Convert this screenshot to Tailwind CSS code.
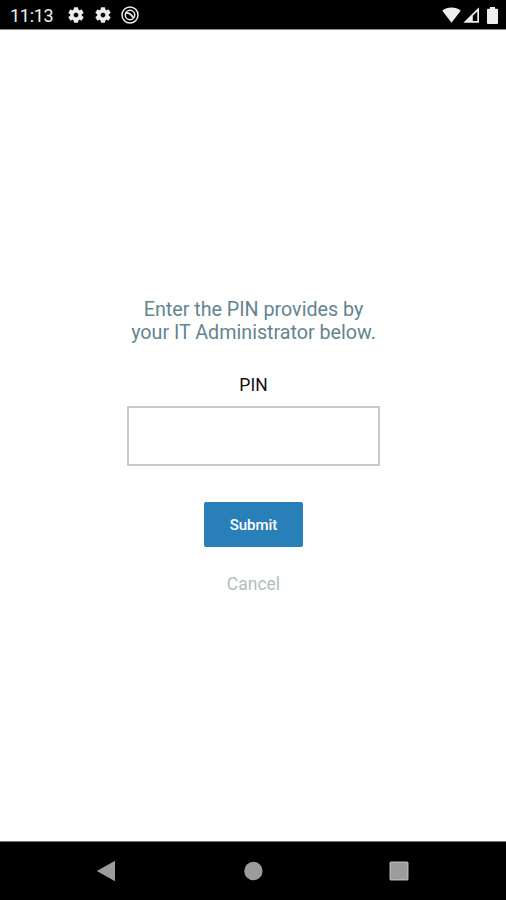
<!DOCTYPE html>
<html lang="en">
<head>
  <meta charset="UTF-8" />
  <meta name="viewport" content="width=device-width, initial-scale=1" />
  <title>Enter PIN</title>
  <script src="https://cdn.jsdelivr.net/npm/@tailwindcss/browser@4"></script>
  <style>
    body {
      font-family: Roboto, sans-serif;
    }
  </style>
</head>
<body class="bg-white h-[900px] flex flex-col overflow-hidden">
  <!-- Status bar -->
  <header class="bg-black h-[30px] shrink-0 border-b border-[#8a8a8a] flex items-center justify-between pl-2.5 pr-2 pt-px text-[#eeeeee]">
    <div class="flex items-center">
      <span class="w-[57px] pt-px text-[18px] leading-6 tracking-[-0.3px]">11:13</span>
      <svg class="w-[18px] h-[18px] mr-[9px]" viewBox="0 0 24 24" fill="currentColor" stroke="currentColor" stroke-width=".7">
        <path d="M19.43 12.98c.04-.32.07-.64.07-.98s-.03-.66-.07-.98l2.11-1.65c.19-.15.24-.42.12-.64l-2-3.46c-.12-.22-.39-.3-.61-.22l-2.49 1c-.52-.4-1.08-.73-1.69-.98l-.38-2.65A.488.488 0 0 0 14 2h-4c-.25 0-.46.18-.49.42l-.38 2.65c-.61.25-1.17.59-1.69.98l-2.49-1c-.23-.09-.49 0-.61.22l-2 3.46c-.13.22-.07.49.12.64l2.11 1.65c-.04.32-.07.65-.07.98s.03.66.07.98l-2.11 1.65c-.19.15-.24.42-.12.64l2 3.46c.12.22.39.3.61.22l2.49-1c.52.4 1.08.73 1.69.98l.38 2.65c.03.24.24.42.49.42h4c.25 0 .46-.18.49-.42l.38-2.65c.61-.25 1.17-.59 1.69-.98l2.49 1c.23.09.49 0 .61-.22l2-3.46c.12-.22.07-.49-.12-.64l-2.11-1.65zM12 15.5c-1.93 0-3.5-1.57-3.5-3.5s1.57-3.5 3.5-3.5 3.500 1.570 3.500 3.500-1.570 3.500-3.500 3.500z" />
      </svg>
      <svg class="w-[18px] h-[18px] mr-[9px]" viewBox="0 0 24 24" fill="currentColor" stroke="currentColor" stroke-width=".7">
        <path d="M19.43 12.98c.04-.32.07-.64.07-.98s-.03-.66-.07-.98l2.11-1.65c.19-.15.24-.42.12-.64l-2-3.46c-.12-.22-.39-.3-.61-.22l-2.49 1c-.52-.4-1.08-.73-1.69-.98l-.38-2.65A.488.488 0 0 0 14 2h-4c-.25 0-.46.18-.49.42l-.38 2.65c-.61.25-1.17.59-1.69.98l-2.49-1c-.23-.09-.49 0-.61.22l-2 3.46c-.13.22-.07.49.12.64l2.11 1.65c-.04.32-.07.65-.07.98s.03.66.07.98l-2.11 1.65c-.19.15-.24.42-.12.64l2 3.46c.12.22.39.3.61.22l2.49-1c.52.4 1.08.73 1.69.98l.38 2.65c.03.24.24.42.49.42h4c.25 0 .46-.18.49-.42l.38-2.65c.61-.25 1.17-.59 1.69-.98l2.49 1c.23.09.49 0 .61-.22l2-3.46c.12-.22.07-.49-.12-.64l-2.11-1.65zM12 15.5c-1.93 0-3.5-1.57-3.5-3.5s1.57-3.5 3.5-3.5 3.500 1.570 3.500 3.500-1.570 3.500-3.500 3.500z" />
      </svg>
      <svg class="w-[18px] h-[18px]" viewBox="0 0 18 18" fill="none" stroke="currentColor">
        <circle cx="9" cy="9" r="8" stroke-width="1.5" />
        <circle cx="9" cy="9" r="4.700" stroke-width="1.500" />
        <path d="M4.800 7Q9 6.600 12.400 11.800" stroke-width="1.800" />
      </svg>
    </div>
    <div class="flex items-center">
      <svg class="w-[19px] h-[16px]" viewBox="0 0 19 16" fill="currentColor">
        <path d="M9.5 15.8L.3 3.8C2.8 1.6 6 .5 9.5.5s6.700 1.100 9.200 3.300z" />
      </svg>
      <svg class="w-[17px] h-[16px] ml-0.5" viewBox="0 0 17 16">
        <path d="M.3 15.700L16 .3v15.400z" fill="currentColor" />
        <path d="M9.800 14V8.800L14.300 4.400V14z" fill="#000" />
      </svg>
      <svg class="w-[11px] h-[17px] ml-[7px]" viewBox="0 0 11 17" fill="currentColor">
        <path d="M3 0h5v1.700h2q1 0 1 1V16q0 1-1 1H1q-1 0-1-1V2.700q0-1 1-1h2z" />
      </svg>
    </div>
  </header>

  <main class="flex-grow flex flex-col items-center pt-[268px] pl-px">
    <p class="text-center text-[19.7px] leading-[23px] text-[#648491]">
      Enter the PIN provides by<br />
      your IT Administrator below.
    </p>
    <label for="pin" class="mt-[29px] text-[17.5px] leading-6 text-[#111111]">PIN</label>
    <input id="pin" type="password" class="mt-[9px] w-[253px] h-[60px] border-2 border-[#c6c8cd] px-3 outline-none" />
    <button class="mt-9 w-[99px] h-[45px] rounded-xs bg-[#2980b9] pt-px text-white text-[15px] font-medium">Submit</button>
    <button class="mt-[25px] text-[17.5px] leading-6 text-[#b4bdc1]">Cancel</button>
  </main>

  <!-- Navigation bar -->
  <nav class="bg-black h-[59px] shrink-0 border-t border-[#777777] flex items-center justify-between pl-24 pr-[97px] text-[#9c9c9c]">
    <svg class="w-5 h-[22px]" viewBox="0 0 20 22" fill="currentColor">
      <path d="M.8 11L19 .7v20.600z" />
    </svg>
    <svg class="w-5 h-5" viewBox="0 0 20 20" fill="currentColor">
      <circle cx="10.400" cy="10" r="9.200" />
    </svg>
    <svg class="w-5 h-5" viewBox="0 0 20 20" fill="currentColor">
      <rect x=".5" y=".5" width="19" height="19" rx="1.500" fill="#b4b4b4" />
      <rect x="2" y="2" width="16" height="16" />
    </svg>
  </nav>
</body>
</html>
